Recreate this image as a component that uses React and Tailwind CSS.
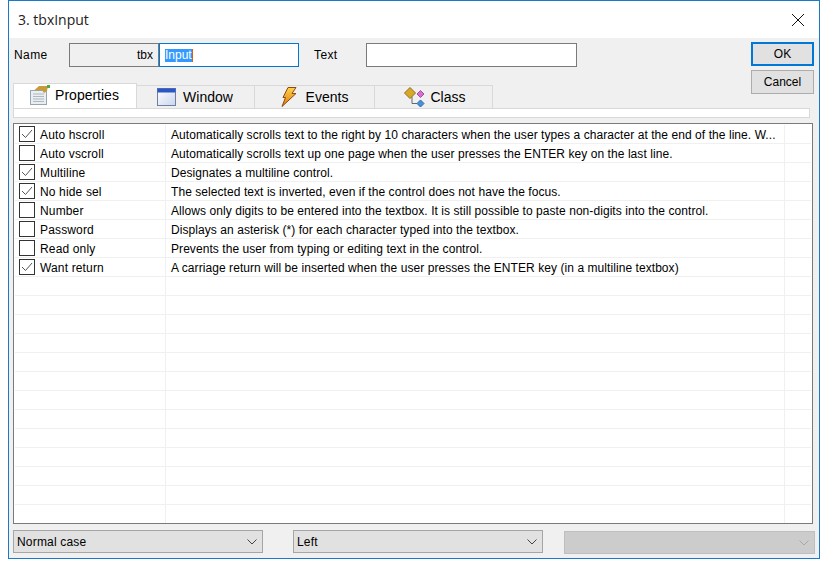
const rows = [
  [true, "Auto hscroll", "Automatically scrolls text to the right by 10 characters when the user types a character at the end of the line. W..."],
  [false, "Auto vscroll", "Automatically scrolls text up one page when the user presses the ENTER key on the last line."],
  [true, "Multiline", "Designates a multiline control."],
  [true, "No hide sel", "The selected text is inverted, even if the control does not have the focus."],
  [false, "Number", "Allows only digits to be entered into the textbox. It is still possible to paste non-digits into the control."],
  [false, "Password", "Displays an asterisk (*) for each character typed into the textbox."],
  [false, "Read only", "Prevents the user from typing or editing text in the control."],
  [true, "Want return", "A carriage return will be inserted when the user presses the ENTER key (in a multiline textbox)"],
  ...Array.from({ length: 13 }, () => [null, "", ""]),
];

function Chevron({ color = "#444" }) {
  return (
    <svg width="10" height="6" viewBox="0 0 10 6" fill="none">
      <path d="M0.500 0.500l4.500 4.500 4.500-4.500" stroke={color} strokeWidth="1" />
    </svg>
  );
}

function PropsIcon() {
  return (
    <svg width="20" height="20" viewBox="0 0 20 20">
      <rect x="0.500" y="5.500" width="16" height="14" fill="#e9eef2" stroke="#9aa6ae" />
      <path d="M3 9h11M3 11.500h11M3 14h11M3 16.500h11" stroke="#aeb8bf" />
      <path d="M4 5.500L9 1h9l-1 5-3 2-2-3z" fill="#c79a3c" />
      <path d="M17 0h3v3h-3z" fill="#4caf3a" />
    </svg>
  );
}

function WindowIcon() {
  return (
    <svg width="19" height="18" viewBox="0 0 19 18">
      <defs>
        <linearGradient id="wg" x1="0" y1="0" x2="1" y2="1">
          <stop offset="0" stopColor="#ffffff" />
          <stop offset="1" stopColor="#c9d6ee" />
        </linearGradient>
      </defs>
      <rect x="0.500" y="0.500" width="18" height="17" fill="url(#wg)" stroke="#6f7f9f" />
      <rect x="0.500" y="0.500" width="18" height="4" fill="#2a56c6" />
    </svg>
  );
}

function BoltIcon() {
  return (
    <svg width="16" height="20" viewBox="0 0 16 20">
      <defs>
        <linearGradient id="bg" x1="0" y1="0" x2="0" y2="1">
          <stop offset="0" stopColor="#ffd24a" />
          <stop offset="1" stopColor="#e07a10" />
        </linearGradient>
      </defs>
      <path d="M7 0.500h8l-4 6h4L1 19.500l3.500-9H2z" fill="url(#bg)" stroke="#8a4a10" strokeWidth="1" />
    </svg>
  );
}

function ClassIcon() {
  return (
    <svg width="21" height="20" viewBox="0 0 21 20">
      <path d="M8 9.500v7h5" stroke="#5f6872" fill="none" />
      <path d="M6 0.500l5.500 5.500L6 11.500 0.500 6z" fill="#d8a828" stroke="#8f6f18" />
      <path d="M16.500 3.500l3.500 3.500-3.500 3.500L13 7z" fill="#d86ed0" stroke="#a84ca0" />
      <path d="M16.500 13l3.500 3.500-3.500 3.500-3.500-3.500z" fill="#4a8fd8" stroke="#2f6aa8" />
    </svg>
  );
}

function Select({ label, width, disabled }) {
  return (
    <div
      className={`flex h-[23px] items-center justify-between border pl-[3px] pr-[5px] tracking-[0.18px] ${
        disabled ? "border-[#bfbfbf] bg-[#cccccc]" : "border-[#a6a6a6] bg-[#e1e1e1]"
      } ${width}`}
    >
      <span>{label}</span>
      <Chevron color={disabled ? "#a8a8a8" : "#444"} />
    </div>
  );
}

function Tab({ icon, label, width, gap, extra }) {
  return (
    <div className={`flex h-[23px] items-center justify-center border-t border-r border-[#d9d9d9] bg-[#f0f0f0] text-[14px] ${width} ${gap} ${extra}`}>
      {icon}
      <span>{label}</span>
    </div>
  );
}

export default function App() {
  return (
    <div className="h-[567px] w-[828px] bg-white pl-2 text-[12px] leading-none text-black [font-family:'Liberation_Sans',Arial,sans-serif]">
      <div className="flex h-[559px] w-[812px] flex-col border border-[#1979ca] bg-[#f0f0f0]">
        <div className="flex h-[37px] shrink-0 items-center justify-between bg-white pl-[9px] pr-[14px]">
          <span className="text-[14px] text-[#222] [font-family:'Open_Sans',sans-serif]">3. tbxInput</span>
          <svg width="14" height="14" viewBox="0 0 14 14" fill="none">
            <path d="M1 1l12 12M13 1L1 13" stroke="#111" strokeWidth="1" />
          </svg>
        </div>

        <div className="flex h-[70px] shrink-0 pl-1">
          <div className="w-[738px]">
            <div className="mt-[5px] flex h-6 items-center">
              <span className="w-[56px] pl-px tracking-[0.4px]">Name</span>
              <div className="flex h-6 w-[90px] items-center justify-end border border-[#7a7a7a] bg-[#f0f0f0] pr-[5px]">tbx</div>
              <div className="flex h-6 w-[140px] items-center border border-[#0078d7] bg-white pl-[5px]">
                <span className="flex h-[13px] items-center border-r border-[#c8641e] bg-[#3399ff] text-white">Input</span>
              </div>
              <span className="ml-[15px] w-[52px] tracking-[0.4px]">Text</span>
              <div className="h-6 w-[211px] border border-[#7a7a7a] bg-white"></div>
            </div>
            <div className="mt-4 flex h-[25px] items-end">
              <div className="flex h-[25px] w-[124px] items-center justify-center gap-[5px] border-x border-t border-[#d9d9d9] bg-white pb-[2px] pr-px text-[14px]">
                <PropsIcon />
                <span>Properties</span>
              </div>
              <Tab icon={<WindowIcon />} label="Window" width="w-[118px]" gap="gap-[7px]" extra="pr-px" />
              <Tab icon={<BoltIcon />} label="Events" width="w-[120px]" gap="gap-[9px]" extra="" />
              <Tab icon={<ClassIcon />} label="Class" width="w-[118px]" gap="gap-[5px]" extra="pl-[3px]" />
            </div>
          </div>
          <div className="mt-1 flex flex-col gap-1">
            <div className="flex h-6 w-[63px] items-center justify-center border-2 border-[#0078d7] bg-[#e1e1e1]">OK</div>
            <div className="flex h-6 w-[63px] items-center justify-center border border-[#adadad] bg-[#e1e1e1]">Cancel</div>
          </div>
        </div>

        <div className="ml-1 h-[10px] w-[797px] shrink-0 border border-[#d9d9d9] bg-white"></div>

        <div className="ml-1 mt-[5px] h-[401px] w-[800px] shrink-0 overflow-hidden border border-[#7a7a7a] bg-white pt-px">
          {rows.map((r, i) => (
            <div key={i} className={`ml-px flex w-[796px] border-[#f0f0f0] ${i === 20 ? "h-[18px]" : "h-[19px] border-b"}`}>
              <div className="flex w-[151px] items-center border-r border-[#f0f0f0]">
                {r[0] !== null && (
                  <>
                    <div className="ml-1 flex h-4 w-4 shrink-0 items-center justify-center border border-[#333] bg-white">
                      {r[0] && (
                        <svg width="12" height="10" viewBox="0 0 12 10" fill="none">
                          <path d="M1 5l3.500 3.500L11 1" stroke="#555" strokeWidth="1" />
                        </svg>
                      )}
                    </div>
                    <span className="ml-[5px] whitespace-nowrap pt-[2px] tracking-[0.15px]">{r[1]}</span>
                  </>
                )}
              </div>
              <div className="flex w-[619px] items-center border-r border-[#f0f0f0] pl-[5px] pt-[2px] whitespace-nowrap tracking-[0.065px]">{r[2]}</div>
            </div>
          ))}
        </div>

        <div className="ml-1 mt-[6px] flex items-start">
          <Select label="Normal case" width="w-[250px]" />
          <div className="ml-[30px]"><Select label="Left" width="w-[250px]" /></div>
          <div className="ml-[21px] mt-px"><Select label="" width="w-[251px]" disabled /></div>
        </div>
      </div>
    </div>
  );
}
